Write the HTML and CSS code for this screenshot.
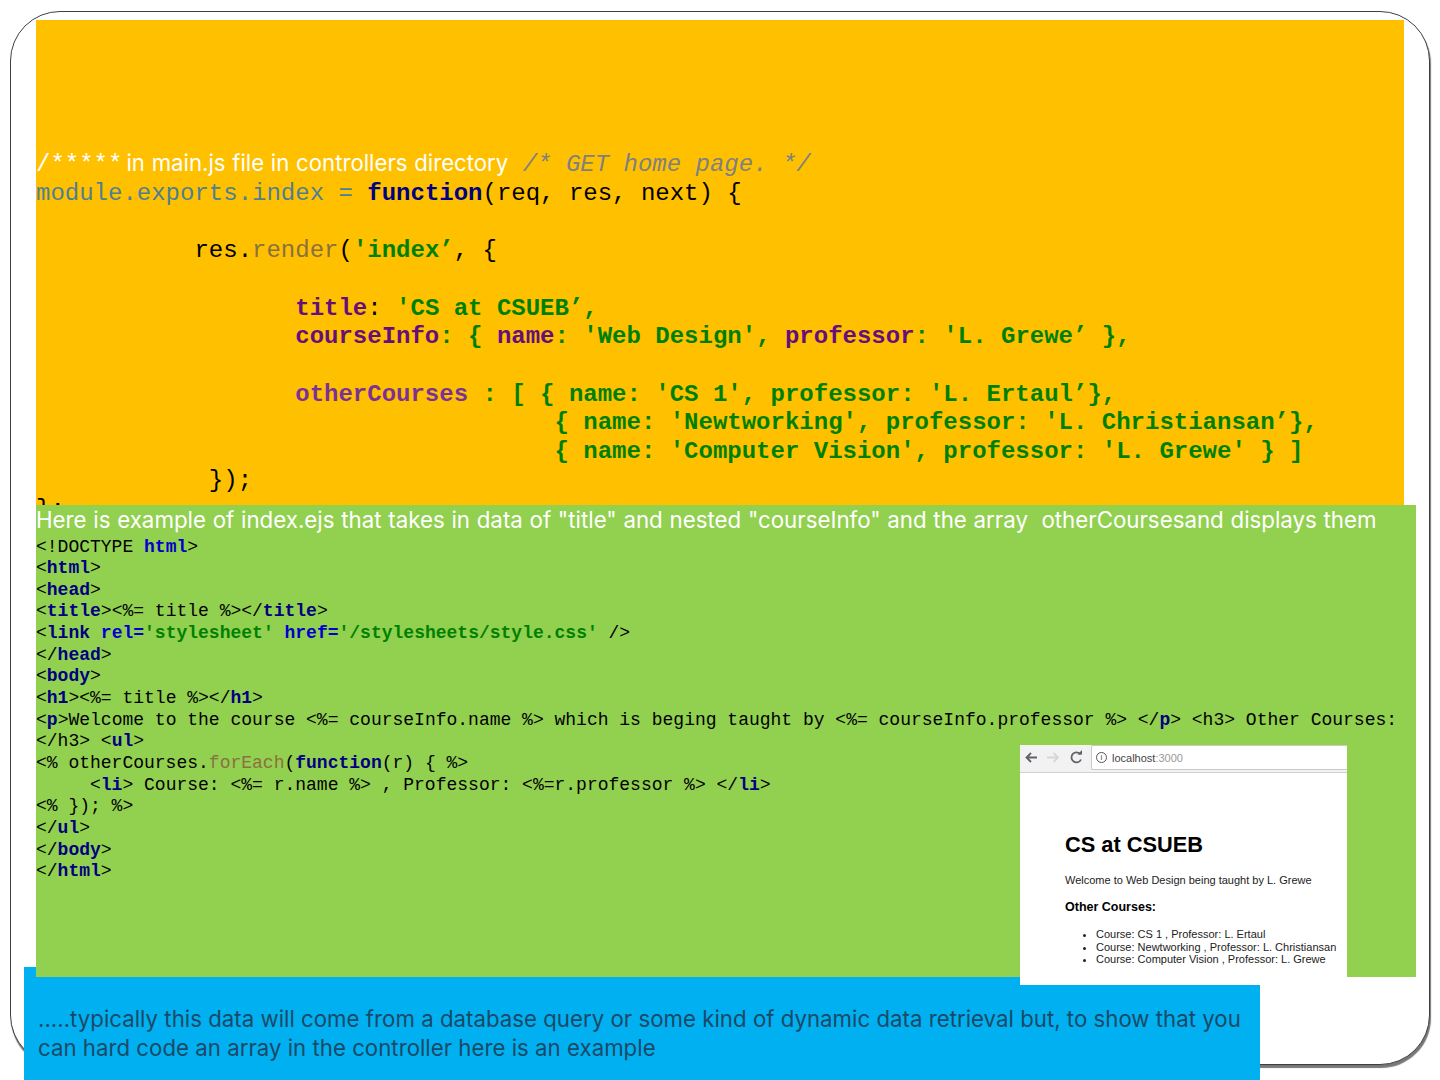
FILE: index.html
```html
<!DOCTYPE html>
<html lang="en">
<head>
<meta charset="utf-8">
<title>Slide</title>
<link rel="stylesheet" href="styles.css">
</head>
<body>
<main class="slide">
<div class="frame"></div>
<section class="yellow">
<div class="yl first"><span class="stars">/*****</span><span class="note">in main.js file in controllers directory</span><span class="cmt"> /* GET home page. */</span></div>
<div class="yl"><span class="teal">module.exports.index = </span><b class="navy">function</b>(req, res, next) {</div>
<div class="yl"> </div>
<div class="yl">           res.<span class="brown">render</span>(<b class="green">'index’</b>, {</div>
<div class="yl"> </div>
<div class="yl">                  <b class="purple">title</b>: <b class="green">'CS at CSUEB’,</b></div>
<div class="yl">                  <b class="purple">courseInfo</b><b class="green">: { </b><b class="purple">name</b><b class="green">: 'Web Design', </b><b class="purple">professor</b><b class="green">: 'L. Grewe’ },</b></div>
<div class="yl"> </div>
<div class="yl">                  <b class="violet">otherCourses</b><b class="green"> : [ { name: 'CS 1', professor: 'L. Ertaul’},</b></div>
<div class="yl"><b class="green">                                    { name: 'Newtworking', professor: 'L. Christiansan’},</b></div>
<div class="yl"><b class="green">                                    { name: 'Computer Vision', professor: 'L. Grewe' } ]</b></div>
<div class="yl">            });</div>
<div class="yl">};</div>
</section>
<section class="blue-box">
<p>.....typically this data will come from a database query or some kind of dynamic data retrieval but, to show that you can hard code an array in the controller here is an example</p>
</section>
<section class="lime">
<p class="heading">Here is example of index.ejs that takes in data of "title" and nested "courseInfo" and the array  otherCoursesand displays them</p>
<div class="gl">&lt;!DOCTYPE <b class="blue">html</b>&gt;</div>
<div class="gl">&lt;<b class="navy">html</b>&gt;</div>
<div class="gl">&lt;<b class="navy">head</b>&gt;</div>
<div class="gl">&lt;<b class="navy">title</b>&gt;&lt;%= title %&gt;&lt;/<b class="navy">title</b>&gt;</div>
<div class="gl">&lt;<b class="navy">link</b> <b class="blue">rel=</b><b class="green">'stylesheet'</b> <b class="blue">href=</b><b class="green">'/stylesheets/style.css'</b> /&gt;</div>
<div class="gl">&lt;/<b class="navy">head</b>&gt;</div>
<div class="gl">&lt;<b class="navy">body</b>&gt;</div>
<div class="gl">&lt;<b class="navy">h1</b>&gt;&lt;%= title %&gt;&lt;/<b class="navy">h1</b>&gt;</div>
<div class="gl">&lt;<b class="navy">p</b>&gt;Welcome to the course &lt;%= courseInfo.name %&gt; which is beging taught by &lt;%= courseInfo.professor %&gt; &lt;/<b class="navy">p</b>&gt; &lt;h3&gt; Other Courses:</div>
<div class="gl">&lt;/h3&gt; &lt;<b class="navy">ul</b>&gt;</div>
<div class="gl">&lt;% otherCourses.<span class="brown">forEach</span>(<b class="navy">function</b>(r) { %&gt;</div>
<div class="gl">     &lt;<b class="navy">li</b>&gt; Course: &lt;%= r.name %&gt; , Professor: &lt;%=r.professor %&gt; &lt;/<b class="navy">li</b>&gt;</div>
<div class="gl">&lt;% }); %&gt;</div>
<div class="gl">&lt;/<b class="navy">ul</b>&gt;</div>
<div class="gl">&lt;/<b class="navy">body</b>&gt;</div>
<div class="gl">&lt;/<b class="navy">html</b>&gt;</div>
</section>
<figure class="shot">
<div class="toolbar">
<svg class="nav" width="70" height="26" viewBox="0 0 70 26" fill="none" stroke-width="1.8">
<path d="M17 12.500H6.500M11 8l-4.500 4.500L11 17" stroke="#5f6368"/>
<path d="M27 12.500H38M33.500 8l4.500 4.500L33.500 17" stroke="#d4d6d8"/>
<path d="M60.500 9.500A5 5 0 1 0 61 14.500" stroke="#5f6368"/>
<path d="M57.500 9.500h4.500V5z" fill="#5f6368" stroke="none"/>
</svg>
<div class="url"><span class="info">i</span><span>localhost</span><span class="port">:3000</span></div>
</div>
<div class="page">
<h1>CS at CSUEB</h1>
<p>Welcome to Web Design being taught by L. Grewe</p>
<h3>Other Courses:</h3>
<ul>
<li>Course: CS 1 , Professor: L. Ertaul</li>
<li>Course: Newtworking , Professor: L. Christiansan</li>
<li>Course: Computer Vision , Professor: L. Grewe</li>
</ul>
</div>
</figure>
</main>
</body>
</html>
```

FILE: styles.css
```css
* { box-sizing: border-box; }
html, body { margin: 0; padding: 0; background: #fff; }
.slide { position: relative; width: 1440px; height: 1080px; overflow: hidden; background: #fff; }
.frame { position: absolute; left: 9.500px; top: 10.500px; width: 1420px; height: 1054.500px; border: 1.500px solid #3f3f3f; border-radius: 50px; box-shadow: 1px 3px 1px #777; background: #fff; }
.yellow { position: absolute; left: 36px; top: 20px; width: 1368px; height: 490px; padding-top: 129px; background: #ffc000; overflow: hidden; font: 24px/28.72px "Liberation Mono", monospace; color: #000; }
.yl { height: 28.72px; white-space: pre; }
.first { height: 30.72px; }
.stars { color: #fff; margin-right: 4px; }
.note { font: 400 22.200px/28.72px Inter, sans-serif; color: #fff; word-spacing: 0.500px; }
.cmt { font-style: italic; color: #808080; }
.teal { color: #4f8091; }
.brown { color: #8a7040; }
.navy { color: #000080; }
.green { color: #008000; }
.purple { color: #660e7a; }
.violet { color: #7b3294; }
.blue { color: #0000cd; }
.lime { position: absolute; left: 36px; top: 505px; width: 1380px; height: 472px; background: #92d050; font: 18px/21.67px "Liberation Mono", monospace; color: #000; }
.heading { margin: 0; height: 31.500px; font: 400 22.300px/30px Inter, sans-serif; color: #fff; word-spacing: 0.450px; white-space: pre; }
.gl { height: 21.67px; white-space: pre; }
.blue-box { position: absolute; left: 24px; top: 967px; width: 1236px; height: 113px; padding: 38px 10px 0 14px; background: #00b0f0; }
.blue-box p { margin: 0; font: 400 22.260px/28.8px Inter, sans-serif; color: #1b4a68; }
.shot { position: absolute; left: 1020px; top: 745px; width: 327px; height: 240px; margin: 0; background: #fff; font-family: "Liberation Sans", sans-serif; color: #000; overflow: hidden; }
.toolbar { display: flex; height: 28px; background: #f2f2f2; border-bottom: 1px solid #d0d0d0; }
.nav { flex: none; margin: 0 1px 0 0; }
.url { flex: 1; display: flex; align-items: center; height: 25px; background: #fff; border: 1px solid #c9c9c9; border-right: 0; border-radius: 2px 0 0 2px; padding-left: 4px; font-size: 11px; color: #444; }
.info { width: 11px; height: 11px; margin-right: 5px; border: 1px solid #555; border-radius: 50%; font-size: 8px; line-height: 9px; text-align: center; }
.port { color: #999; }
.page { padding: 60px 0 0 45px; }
.page h1 { margin: 0; font-size: 21.800px; line-height: 24px; font-weight: 700; }
.page p { margin: 17px 0 0; font-size: 11px; line-height: 13px; color: #222; }
.page h3 { margin: 13px 0 0; font-size: 12.500px; line-height: 14px; }
.page ul { margin: 14px 0 0; padding: 0 0 0 31px; font-size: 11px; line-height: 12.600px; color: #222; }
```
